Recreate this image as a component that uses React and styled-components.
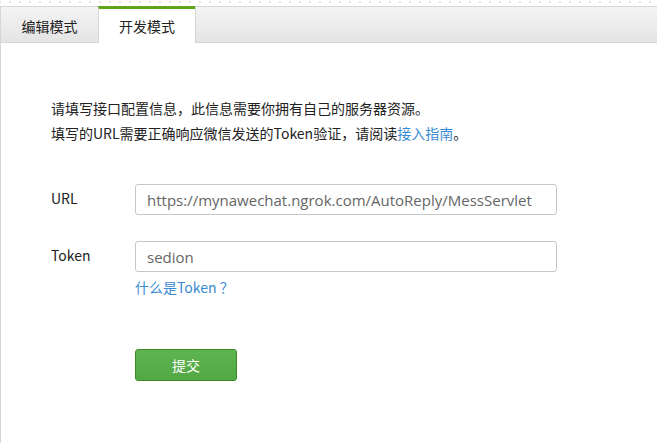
import React from "react";
import styled, { createGlobalStyle } from "styled-components";

const Global = createGlobalStyle`
  html, body {
    margin: 0;
    padding: 0;
    background: #fff;
  }
  body {
    font-family: "Microsoft YaHei", "Noto Sans CJK SC", "Open Sans", sans-serif;
    font-size: 14px;
    color: #222;
  }
`;

const Page = styled.div`
  width: 657px;
  height: 443px;
  overflow: hidden;
  display: flex;
  flex-direction: column;
`;

const Dots = styled.div`
  height: 6px;
  background-image: radial-gradient(circle, #e4e4e4 0.7px, transparent 1px);
  background-size: 10px 4px;
  background-position: 5px 0;
  background-repeat: repeat-x;
`;

const TabBar = styled.div`
  display: flex;
  height: 37px;
`;

const Tab = styled.div`
  box-sizing: border-box;
  width: ${(p) => p.w}px;
  display: flex;
  align-items: center;
  justify-content: center;
  border-top: 1px solid #d6d6d6;
  border-left: 1px solid #d6d6d6;
  border-bottom: 1px solid #d6d6d6;
  background: linear-gradient(#f4f4f4, #e4e4e4);
  color: #222;
  padding-top: 2px;

  &.active {
    border-top: 3px solid #5ea517;
    border-bottom: 1px solid transparent;
    background: #fff;
    padding-top: 0;
  }
`;

const Filler = styled(Tab)`
  flex: 1;
`;

const Panel = styled.div`
  flex: 1;
  border-left: 1px solid #d6d6d6;
  padding: 53px 0 0 50px;
`;

const Intro = styled.p`
  margin: 0;
  line-height: 25px;
  font-size: 14px;
  color: #222;
`;

const Link = styled.a`
  color: #3a8ad3;
  text-decoration: none;
`;

const Form = styled.div`
  margin-top: 38px;
  display: flex;
  flex-direction: column;
`;

const Row = styled.div`
  display: flex;
  align-items: center;
  margin-bottom: ${(p) => p.gap || 0}px;
`;

const Label = styled.label`
  width: 84px;
  font-size: 14px;
  color: #222;
  margin-top: -3px;
`;

const Field = styled.div`
  box-sizing: border-box;
  width: 422px;
  height: 31px;
  border: 1px solid #c7c7c7;
  border-radius: 3px;
  padding: 0 11px;
  display: flex;
  align-items: center;
  font-family: "Segoe UI", "Open Sans", "Noto Sans CJK SC", sans-serif;
  font-size: 15px;
  color: #666;
`;

const Hint = styled.div`
  margin: 5px 0 0 84px;
  font-size: 14px;
  color: #3a8ad3;
`;

const Submit = styled.button`
  margin: 52px 0 0 84px;
  box-sizing: border-box;
  width: 102px;
  height: 32px;
  border: 1px solid #3e8b26;
  border-radius: 3px;
  background: linear-gradient(#5fb452, #52a845);
  color: #fff;
  font-family: "Microsoft YaHei", "Noto Sans CJK SC", sans-serif;
  font-size: 14px;
  cursor: pointer;
`;

export default function App() {
  return (
    <Page>
      <Global />
      <Dots />
      <TabBar>
        <Tab w={98}>编辑模式</Tab>
        <Tab w={97} className="active">开发模式</Tab>
        <Filler />
      </TabBar>
      <Panel>
        <Intro>请填写接口配置信息，此信息需要你拥有自己的服务器资源。</Intro>
        <Intro>
          填写的URL需要正确响应微信发送的Token验证，请阅读<Link>接入指南</Link>。
        </Intro>
        <Form>
          <Row gap={26}>
            <Label>URL</Label>
            <Field>https://mynawechat.ngrok.com/AutoReply/MessServlet</Field>
          </Row>
          <Row>
            <Label>Token</Label>
            <Field>sedion</Field>
          </Row>
          <Hint>什么是Token ？</Hint>
          <Submit>提交</Submit>
        </Form>
      </Panel>
    </Page>
  );
}
